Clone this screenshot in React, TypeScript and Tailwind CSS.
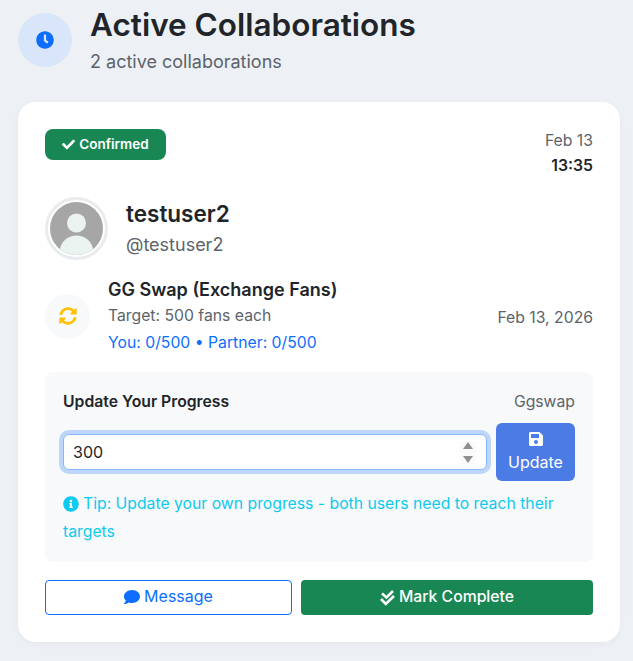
import React from "react";
import { FaCheck, FaClock, FaComment, FaInfoCircle, FaSave, FaSyncAlt } from "react-icons/fa";

export default function App() {
  return (
    <div className="h-[661px] overflow-hidden bg-[#edf1f6] px-[18px] font-['Inter',sans-serif] text-[#212529]">
      <header className="flex h-[102px] items-start gap-[18px]">
        <div className="mt-[13px] flex h-[54px] w-[54px] items-center justify-center rounded-full bg-[#d9e5f9]">
          <FaClock className="h-[18px] w-[18px] text-[#0d6efd]" />
        </div>
        <div>
          <h1 className="mt-[6px] text-[31.5px] leading-[38px] font-semibold">Active Collaborations</h1>
          <p className="mt-[4px] text-[18px] leading-[27px] text-[#5c636a]">2 active collaborations</p>
        </div>
      </header>

      <main className="h-[540px] w-[602px] rounded-[18px] bg-white p-[27px] shadow-[0_2px_8px_rgba(0,0,0,0.04)]">
        <div className="flex items-start justify-between">
          <span className="flex h-[31px] w-[121px] items-center justify-center gap-1 rounded-lg bg-[#198754] text-[13.5px] font-semibold text-white">
            <FaCheck className="h-[13px] w-[13px]" />
            Confirmed
          </span>
          <div className="text-right text-[15.75px] leading-6">
            <div className="text-[#5c636a]">Feb 13</div>
            <div className="mt-[1px] font-semibold">13:35</div>
          </div>
        </div>

        <div className="mt-[19px] flex items-center gap-[18px]">
          <div className="h-[63px] w-[63px] rounded-full border-[3px] border-[#e9ecef] bg-white p-[2px]">
            <svg viewBox="0 0 53 53" className="h-full w-full rounded-full">
              <rect width="53" height="53" fill="#a6a6a6" />
              <circle cx="26.5" cy="21" r="9.5" fill="#eaf3ef" />
              <ellipse cx="26.5" cy="49" rx="16.5" ry="15.5" fill="#eaf3ef" />
            </svg>
          </div>
          <div>
            <div className="text-[22.5px] leading-[27px] font-semibold">testuser2</div>
            <div className="mt-[4px] text-[18px] leading-[27px] text-[#5c636a]">@testuser2</div>
          </div>
        </div>

        <div className="mt-[16px] flex items-center">
          <div className="flex h-[45px] w-[45px] items-center justify-center rounded-full bg-[#f8f9fa]">
            <FaSyncAlt className="h-[18px] w-[18px] text-[#ffc107]" />
          </div>
          <div className="ml-[18px] flex-1">
            <div className="text-[18px] leading-[27px] font-semibold">GG Swap (Exchange Fans)</div>
            <div className="text-[15.75px] leading-[26px] text-[#5c636a]">Target: 500 fans each</div>
            <div className="text-[15.75px] leading-[27px] text-[#0d6efd]">You: 0/500 • Partner: 0/500</div>
          </div>
          <div className="mt-[3px] text-[15.75px] leading-6 text-[#5c636a]">Feb 13, 2026</div>
        </div>

        <section className="mt-[16px] h-[190px] rounded-lg bg-[#f8f9fa] px-[18px] pt-[18px]">
          <div className="flex items-center justify-between text-[15.75px] leading-6">
            <span className="font-semibold">Update Your Progress</span>
            <span className="text-[#5c636a]">Ggswap</span>
          </div>
          <div className="mt-[9px] flex items-center gap-[9px]">
            <div className="flex h-[36px] flex-1 items-center rounded-[6px] border border-[#86b7fe] bg-white pr-[10px] pl-[9px] text-base shadow-[0_0_0_4px_rgba(13,110,253,0.25)]">
              <span className="mb-[1px] flex-1">300</span>
              <div className="bg-[#fafafa] px-[3px] py-[1px]">
                <svg viewBox="0 0 10 21" className="block h-[21px] w-[10px]" fill="#8f8f8f">
                  <path d="M5 0 L10 7 H0 Z" />
                  <path d="M0 14 H10 L5 21 Z" />
                </svg>
              </div>
            </div>
            <button className="flex h-[58px] w-[79px] flex-col items-center justify-center rounded-[6px] bg-[#4b7be5] text-base leading-6 text-white">
              <FaSave className="mt-[1px] h-[16px] w-[16px]" />
              <span className="mt-[3px]">Update</span>
            </button>
          </div>
          <p className="mt-[9px] text-[15.75px] leading-[28px] text-[#0dcaf0]">
            <FaInfoCircle className="mr-1 mb-[2px] inline h-[16px] w-[16px]" />
            Tip: Update your own progress - both users need to reach their targets
          </p>
        </section>

        <div className="mt-[18px] flex gap-[9px]">
          <button className="flex h-[35px] w-[247px] items-center justify-center gap-1 rounded-[4px] border border-[#0d6efd] text-base leading-6 text-[#0d6efd]">
            <FaComment className="mb-[1px] h-[16px] w-[16px]" />
            <span className="mb-[3px]">Message</span>
          </button>
          <button className="flex h-[35px] flex-1 items-center justify-center gap-1 rounded-[4px] bg-[#198754] text-[15.75px] font-medium text-white">
            <svg viewBox="0 0 15 16" className="h-4 w-[15px]" fill="none" stroke="currentColor" strokeWidth="2.6">
              <path d="M2 3.5 L6.5 7.5 L13 1" />
              <path d="M1 9 L5.8 14 L14 6" />
            </svg>
            <span className="mb-[2px]">Mark Complete</span>
          </button>
        </div>
      </main>
    </div>
  );
}
